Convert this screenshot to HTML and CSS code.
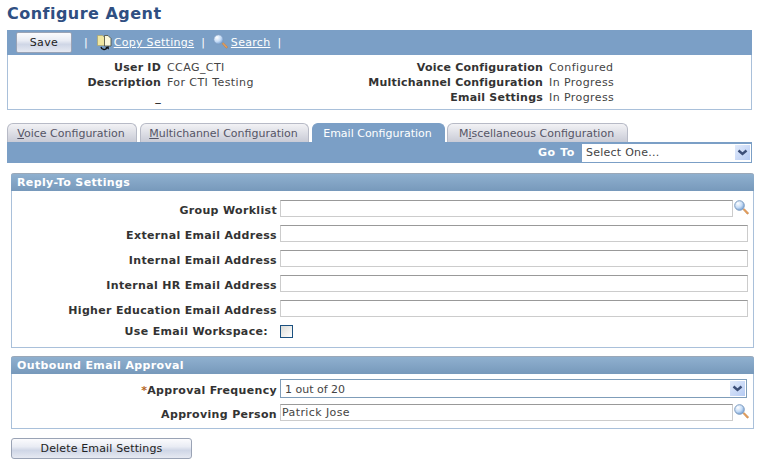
FILE: index.html
```html
<!DOCTYPE html>
<html lang="en">
<head>
<meta charset="utf-8">
<title>Configure Agent</title>
<link rel="stylesheet" href="styles.css">
</head>
<body>
<svg class="defs" width="0" height="0" aria-hidden="true">
  <defs>
    <radialGradient id="lens" cx="35%" cy="30%" r="75%">
      <stop offset="0" stop-color="#ffffff"/>
      <stop offset="0.55" stop-color="#c6dcf6"/>
      <stop offset="1" stop-color="#6f9bd0"/>
    </radialGradient>
    <symbol id="lookup" viewBox="0 0 15 15">
      <path d="M9 9.6l1.2-1 4.2 4.2c.5.6-.7 1.8-1.3 1.2z" fill="#e8a05c" stroke="#b9783f" stroke-width=".5"/>
      <circle cx="5.5" cy="5.5" r="4.8" fill="url(#lens)" stroke="#7d9cc0"/>
    </symbol>
    <symbol id="chev" viewBox="0 0 15 15">
      <path d="M3.5 5.5L7.5 9L11.5 5.5" fill="none" stroke="#3c4f78" stroke-width="2.4"/>
    </symbol>
  </defs>
</svg>
<h1 class="title">Configure Agent</h1>
<div class="toolbar">
  <button class="btn btn-save" type="button">Save</button>
  <span class="sep sep-first">|</span>
  <svg class="copy-icon" width="15" height="16" viewBox="0 0 15 16" aria-hidden="true">
    <path d="M.5 .5h5l2 2v8h-7z" fill="#efe6a0" stroke="#a9a26c" stroke-width=".7"/>
    <path d="M7.5 2v-1.500h3.500l3 3v7.500h-6.500z" fill="#fbf8dc" stroke="#4a4a38" stroke-width=".8"/>
    <path d="M4 12c.6 3 5 3.600 6.200 .3" fill="none" stroke="#111" stroke-width="1.300"/>
    <path d="M8.300 12.200l3.400-1 .2 3.200z" fill="#111"/>
  </svg>
  <a class="tool-link tool-copy" href="#">Copy Settings</a>
  <span class="sep sep-mid">|</span>
  <svg class="search-icon" width="15" height="15" aria-hidden="true"><use href="#lookup"/></svg>
  <a class="tool-link" href="#">Search</a>
  <span class="sep sep-last">|</span>
</div>
<div class="summary">
  <div class="summary-col summary-left">
    <span class="lbl">User ID</span><span class="val">CCAG_CTI</span>
    <span class="lbl">Description</span><span class="val">For CTI Testing</span>
    <span class="lbl">_</span><span class="val"></span>
  </div>
  <div class="summary-col summary-right">
    <span class="lbl">Voice Configuration</span><span class="val">Configured</span>
    <span class="lbl">Multichannel Configuration</span><span class="val">In Progress</span>
    <span class="lbl">Email Settings</span><span class="val">In Progress</span>
  </div>
</div>
<div class="tabs">
  <div class="tab tab-voice"><u>V</u>oice Configuration</div>
  <div class="tab tab-multi"><u>M</u>ultichannel Configuration</div>
  <div class="tab tab-active">Email Configuration</div>
  <div class="tab tab-misc">M<u>i</u>scellaneous Configuration</div>
</div>
<div class="goto-bar">
  <span class="goto-label">Go To</span>
  <div class="goto-select">
    <span>Select One...</span>
    <span class="arrow"><svg width="15" height="15" aria-hidden="true"><use href="#chev"/></svg></span>
  </div>
</div>
<section class="group group-reply">
  <h2 class="group-title">Reply-To Settings</h2>
  <div class="form form-reply">
    <span class="lbl">Group Worklist</span>
    <div class="field-row"><div class="field field-short"></div><svg class="lookup" width="15" height="15" aria-hidden="true"><use href="#lookup"/></svg></div>
    <span class="lbl">External Email Address</span>
    <div class="field-row"><div class="field"></div></div>
    <span class="lbl">Internal Email Address</span>
    <div class="field-row"><div class="field"></div></div>
    <span class="lbl">Internal HR Email Address</span>
    <div class="field-row"><div class="field"></div></div>
    <span class="lbl">Higher Education Email Address</span>
    <div class="field-row"><div class="field"></div></div>
    <span class="lbl lbl-check">Use Email Workspace:</span>
    <div class="check-row"><div class="checkbox"></div></div>
  </div>
</section>
<section class="group group-approval">
  <h2 class="group-title">Outbound Email Approval</h2>
  <div class="form form-approval">
    <span class="lbl"><span class="req">*</span>Approval Frequency</span>
    <div class="select-row">
      <div class="select-wide">
        <span class="select-value">1 out of 20</span>
        <span class="arrow"><svg width="15" height="15" aria-hidden="true"><use href="#chev"/></svg></span>
      </div>
    </div>
    <span class="lbl">Approving Person</span>
    <div class="field-row"><div class="field field-short field-text">Patrick Jose</div><svg class="lookup" width="15" height="15" aria-hidden="true"><use href="#lookup"/></svg></div>
  </div>
</section>
<button class="btn btn-delete" type="button">Delete Email Settings</button>
</body>
</html>
```
FILE: styles.css
```css
* { box-sizing: border-box; }
html, body { margin: 0; padding: 0; }
body {
  width: 764px;
  height: 463px;
  overflow: hidden;
  background: #fff;
  color: #333;
  font: 11px/15px "DejaVu Sans", Verdana, sans-serif;
  padding: 0 0 0 7px;
}
.defs { position: absolute; }
.title {
  margin: 0;
  height: 30px;
  padding-top: 4px;
  font-size: 16px;
  line-height: 20px;
  font-weight: bold;
  letter-spacing: .47px;
  color: #2f4f82;
}
.toolbar {
  width: 745px;
  height: 25px;
  background: #7b9fc6;
  display: flex;
  align-items: center;
  color: #fff;
  padding-left: 9px;
}
.btn {
  font: 11px "DejaVu Sans", Verdana, sans-serif;
  color: #222;
  border: 1px solid #9aa3b5;
  border-radius: 2px;
  background: linear-gradient(#fbfbfd 0%, #e9ecf4 40%, #cfd6e6 60%, #e6e9f2 100%);
  padding: 0;
}
.btn-save { width: 56px; height: 21px; letter-spacing: .4px; }
.sep { color: #fff; }
.sep-first { margin: 0 8px 0 12px; }
.sep-mid { margin: 0 4px 0 7px; }
.sep-last { margin-left: 7px; }
.copy-icon { margin: 0 2px 0 1px; flex: none; }
.search-icon { margin: -2px 3px 0 4px; flex: none; }
.tool-link { color: #fff; letter-spacing: .3px; }
.summary {
  width: 745px;
  height: 55px;
  border: 1px solid #a9c0da;
  border-top: 0;
  display: flex;
  padding-top: 5px;
  color: #444;
}
.summary-col {
  display: grid;
  grid-auto-rows: 15px;
  column-gap: 6px;
  align-content: start;
}
.summary-left { grid-template-columns: 153px 150px; }
.summary-right { grid-template-columns: 226px auto; }
.val { letter-spacing: .42px; }
.lbl {
  text-align: right;
  font-weight: bold;
  color: #333;
  white-space: nowrap;
  letter-spacing: .33px;
}
.summary .lbl { letter-spacing: .22px; }
.tabs {
  display: flex;
  margin-top: 13px;
  height: 19px;
  align-items: flex-end;
}
.tab {
  height: 19px;
  padding: 2px 2px 0 0;
  text-align: center;
  white-space: nowrap;
  color: #555566;
  border: 1px solid #b7bac6;
  border-bottom: 0;
  border-radius: 6px 6px 0 0;
  background: linear-gradient(#f2f2f5, #c9cbd6);
  margin-right: 3px;
}
.tab-voice { width: 130px; }
.tab-multi { width: 169px; }
.tab-active {
  width: 133px;
  background: #7b9fc6;
  border-color: #7b9fc6;
  color: #fff;
  margin-right: 2px;
}
.tab-misc { width: 181px; margin-right: 0; }
.goto-bar {
  width: 745px;
  height: 21px;
  background: #7b9fc6;
  display: flex;
  align-items: center;
  justify-content: flex-end;
  padding-right: 1px;
}
.goto-label {
  color: #fff;
  font-weight: bold;
  letter-spacing: .6px;
  margin-right: 7px;
}
.goto-select {
  width: 169px;
  height: 18px;
  background: #fff;
  display: flex;
  justify-content: space-between;
  align-items: center;
  padding-left: 4px;
  color: #444;
  letter-spacing: .25px;
}
.arrow {
  width: 15px;
  height: 15px;
  display: block;
  background: linear-gradient(135deg, #e2ebfb, #b6cbf3);
  margin-right: 1px;
}
.arrow svg { display: block; }
.group {
  width: 743px;
  margin-left: 4px;
  border: 1px solid #a9c0da;
  border-top: 0;
  border-radius: 3px 3px 0 0;
}
.group-reply { margin-top: 10px; height: 175px; }
.group-approval { margin-top: 8px; height: 73px; }
.group-title {
  margin: 0 -1px;
  height: 18px;
  padding: 1px 0 0 6px;
  font-size: 11px;
  line-height: 15px;
  font-weight: bold;
  letter-spacing: .36px;
  color: #fff;
  border-radius: 3px 3px 0 0;
  background: linear-gradient(#8fb0cf, #7799bb);
  border-top: 1px solid #9aa8b8;
}
.form {
  display: grid;
  grid-template-columns: 265px 1fr;
  column-gap: 3px;
  align-items: center;
}
.form-reply {
  grid-template-rows: repeat(5, 25px) 17px;
  padding-top: 7px;
}
.form-approval { grid-auto-rows: 24px; padding-top: 4px; }
.field-row {
  display: flex;
  align-items: flex-start;
  align-self: start;
  margin-top: 2px;
}
.check-row { display: flex; align-items: center; }
.select-row { align-self: start; margin-top: 1px; }
.field {
  width: 468px;
  height: 17px;
  background: #fff;
  border: 1px solid #ccc;
  border-top-color: #999;
}
.field-short { width: 453px; }
.field-text {
  line-height: 15px;
  padding-left: 1px;
  color: #444;
  letter-spacing: .4px;
}
.lookup { margin-left: 1px; flex: none; }
.lbl-check { padding-right: 9px; }
.checkbox {
  width: 13px;
  height: 13px;
  border: 1px solid #1c5180;
  background: linear-gradient(135deg, #dcdcd7, #fff);
}
.req { color: #b5671f; font-weight: bold; }
.select-wide {
  width: 467px;
  height: 19px;
  border: 1px solid #7f9db9;
  display: flex;
  justify-content: space-between;
  align-items: center;
  padding-left: 4px;
  color: #444;
}
.select-value { margin-top: 2px; }
.btn-delete {
  display: block;
  width: 181px;
  height: 21px;
  margin: 9px 0 0 4px;
  border-radius: 3px;
  letter-spacing: .15px;
}
```
